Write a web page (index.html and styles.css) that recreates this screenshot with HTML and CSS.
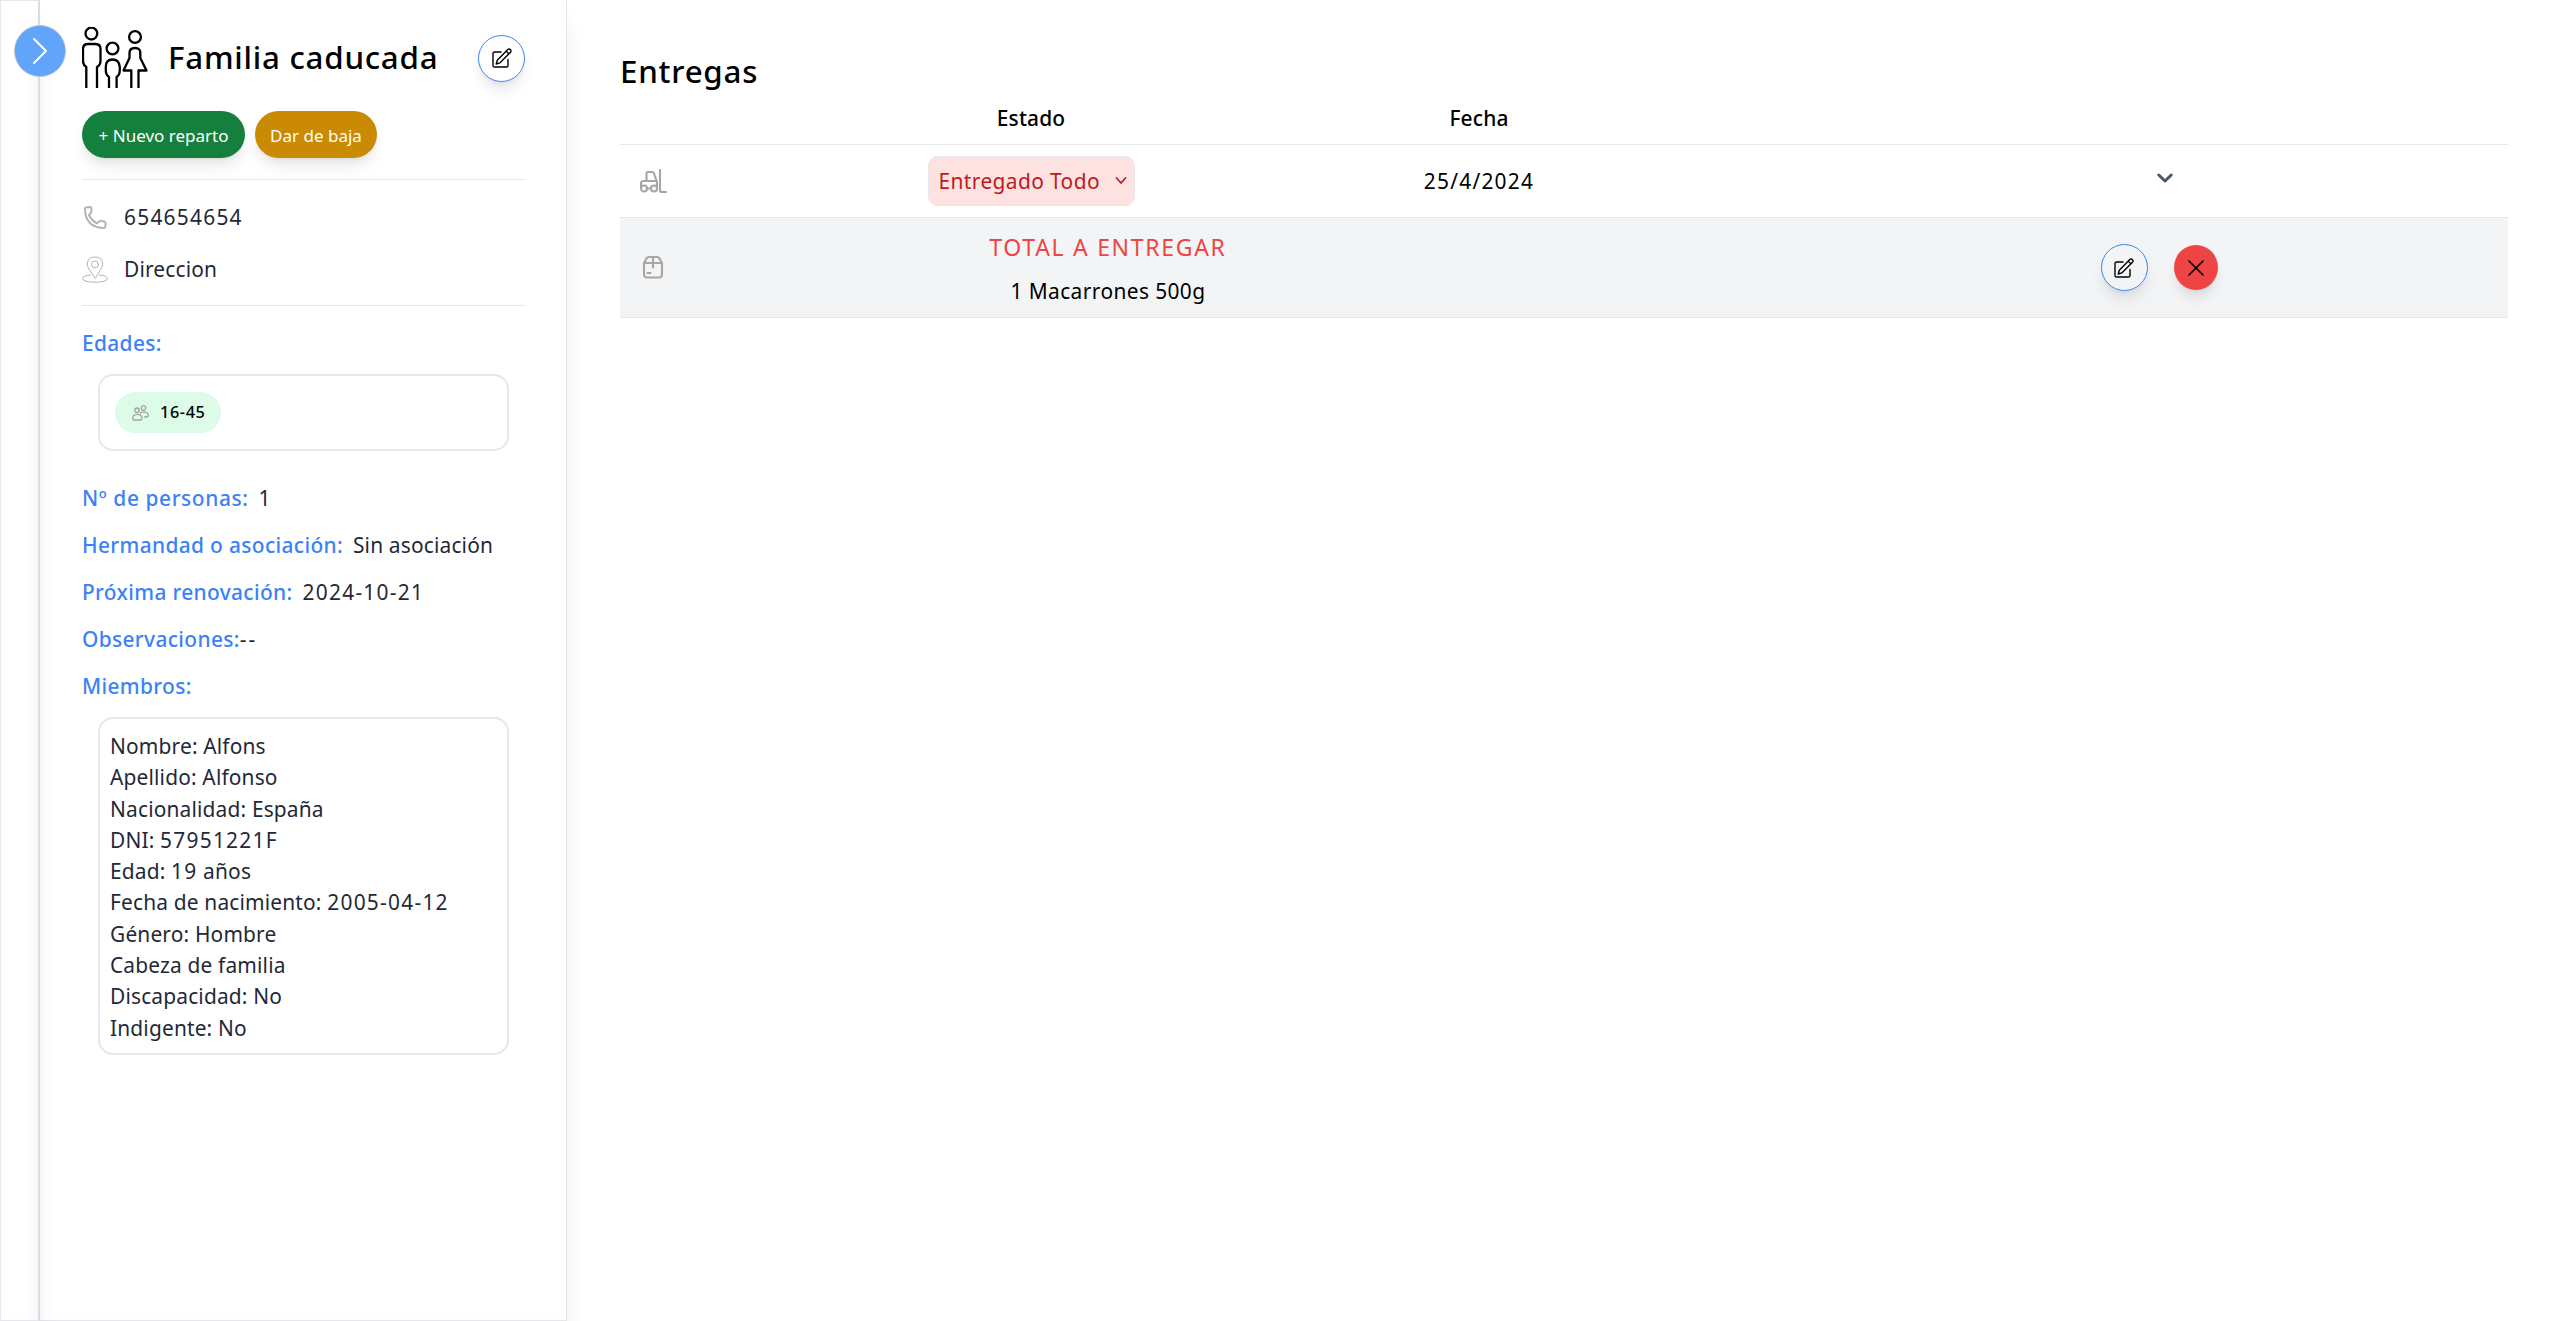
FILE: index.html
```
<!DOCTYPE html>
<html lang="es">
<head>
<meta charset="utf-8">
<title>Familia caducada</title>
<link rel="stylesheet" href="styles.css">
</head>
<body>
<svg class="defs" width="0" height="0">
  <symbol id="edit" viewBox="0 0 20 20">
    <path d="M9 4H2.6Q1 4 1 5.6V17.4Q1 19 2.6 19H14.4Q16 19 16 17.4V11.5"/>
    <path d="M4.2 16 5.3 12.2 15.8 1.6Q17 .5 18.4 1.6 19.6 3 18.5 4.3L8 14.8ZM14.3 3.2 16.9 5.8"/>
  </symbol>
</svg>
<div class="app">
  <div class="rail">
    <button class="toggle" aria-label="Abrir menú">
      <svg width="16" height="28" viewBox="0 0 16 28"><path d="M2 2 14 14 2 26"/></svg>
    </button>
  </div>
  <aside class="panel">
    <header class="family">
      <svg class="people" width="66" height="62" viewBox="0 0 66 62">
        <circle cx="9.4" cy="6.6" r="5.9"/>
        <path d="M4.3 61V40Q1 38 1 34V22Q1 17 6 17H13.500Q18.500 17 18.500 22V34Q18.500 38 15 40V61"/>
        <circle cx="30.500" cy="21.500" r="5.900"/>
        <path d="M27 61V50Q23.800 48 23.800 43V40Q23.800 32.500 30.500 32.500T37.800 40V43Q37.800 48 34.600 50V61"/>
        <circle cx="53" cy="10" r="5.900"/>
        <path d="M49.300 61V43.500H41.500L47.500 31V26Q47.500 21 53 21T58.300 26V31L64.500 43.500H56.500V61"/>
      </svg>
      <h1>Familia caducada</h1>
      <button class="edit" aria-label="Editar"><svg><use href="#edit"/></svg></button>
    </header>
    <div class="actions">
      <button class="pill green">+ Nuevo reparto</button>
      <button class="pill amber">Dar de baja</button>
    </div>
    <section class="contact">
      <div class="line">
        <svg width="26" height="26" viewBox="0 0 26 26" class="phone"><path d="M3 4Q3 2.200 5 2.200L8 2Q9.400 2 9.500 4.500 9.600 6.500 8.700 8.200L7 10Q9.500 15.500 15 18.300L17 16.500Q18.500 15.500 21 16.200 23.700 16.700 23.500 18V21Q23.300 23.200 21 23 12 22.500 7.500 17.500 3 12.500 3 4Z"/></svg>
        <span class="num">654654654</span>
      </div>
      <div class="line">
        <svg width="26" height="27" viewBox="0 0 26 27" class="pin"><path d="M13 22 7.500 14Q5.300 10.500 5.300 8.300 5.500 1 13 1T20.700 8.300Q20.700 10.500 18.500 14Z"/><circle cx="13" cy="8.500" r="3.500"/><path d="M8.500 19Q.700 19.600.700 22.300.700 26.200 13 26.200T25.300 22.300Q25.300 19.600 17.500 19"/></svg>
        <span>Direccion</span>
      </div>
    </section>
    <p class="field"><b>Edades:</b></p>
    <div class="box ages">
      <span class="age">
        <svg width="17" height="16" viewBox="0 0 17 16"><circle cx="5" cy="5.200" r="2.200"/><circle cx="11.500" cy="2.900" r="2.200"/><path d="M.700 13Q1 9.400 5.300 9.400T10 13Q10 15 8.500 15H2.200Q.700 15 .700 13ZM8.500 8Q10 6.800 12 6.900 16.200 7.300 16.300 10.300 16.300 12 14.500 12H12.500"/></svg>
        <span>16-45</span>
      </span>
    </div>
    <p class="field persons"><b>Nº de personas:</b><span class="val">1</span></p>
    <p class="field"><b>Hermandad o asociación:</b><span class="val">Sin asociación</span></p>
    <p class="field renewal"><b>Próxima renovación:</b><span class="val num">2024-10-21</span></p>
    <p class="field"><b>Observaciones:</b><span class="dash">--</span></p>
    <p class="field"><b>Miembros:</b></p>
    <div class="box member">
      <p>Nombre: Alfons</p>
      <p>Apellido: Alfonso</p>
      <p>Nacionalidad: España</p>
      <p>DNI: <span class="num">57951221F</span></p>
      <p>Edad: <span class="num">19</span> años</p>
      <p>Fecha de nacimiento: <span class="num">2005-04-12</span></p>
      <p>Género: Hombre</p>
      <p>Cabeza de familia</p>
      <p>Discapacidad: No</p>
      <p>Indigente: No</p>
    </div>
  </aside>
  <main class="main">
    <h2>Entregas</h2>
    <div class="row head"><span></span><b>Estado</b><b>Fecha</b></div>
    <div class="row delivery">
      <span class="icon"><svg width="28" height="24" viewBox="0 0 28 24"><circle cx="5" cy="19.500" r="3"/><circle cx="15" cy="19.500" r="3"/><path d="M8 19.500H12M2 19V14.500Q2 12 4.500 12H7M7.500 12V5Q7.500 3 9 3H13Q14.500 3 15 4.500L18 13V19M7 12H17.500M21 1V21.500Q21 23 22.500 23H27"/></svg></span>
      <span><button class="state">Entregado Todo<svg width="12" height="8" viewBox="0 0 12 8"><path d="M1.500 1 6 6 10.500 1"/></svg></button></span>
      <span class="num">25/4/2024</span>
      <span></span>
      <span class="chevron"><svg width="16" height="11" viewBox="0 0 16 11"><path d="M1.800 2 8 8 14.200 2"/></svg></span>
    </div>
    <div class="row total">
      <span class="icon"><svg width="28" height="24" viewBox="0 0 28 24"><path d="M5 8 7.500 3.400Q8.300 2 10 2H18Q19.700 2 20.500 3.400L23 8V19.500Q23 22.500 20 22.500H8Q5 22.500 5 19.500ZM5 8H23M14 2V12.500M8.500 18H11.500"/></svg></span>
      <div class="goods"><p class="caps">TOTAL A ENTREGAR</p><p class="item">1 Macarrones 500g</p></div>
      <span></span>
      <span class="tools">
        <button class="edit" aria-label="Editar"><svg><use href="#edit"/></svg></button>
        <button class="remove" aria-label="Eliminar"><svg width="16" height="16" viewBox="0 0 16 16"><path d="M1 1 15 15M15 1 1 15"/></svg></button>
      </span>
    </div>
  </main>
</div>
</body>
</html>
```
FILE: styles.css
```
* { box-sizing: border-box; margin: 0; padding: 0; }
body { background: #fff; font: 20.9px/31.3px "Noto Sans", sans-serif; color: #000; letter-spacing: .17px; }
button { font: inherit; letter-spacing: inherit; border: 0; background: none; }
svg { display: block; fill: none; stroke: currentColor; stroke-linecap: round; stroke-linejoin: round; flex: none; }
.defs { position: absolute; }
b, h1, h2 { font-weight: 500; }
.num { letter-spacing: 1.25px; }

.app { display: flex; height: 1321px; }
.rail { position: relative; width: 40px; border: 1px solid #e5e7eb; border-right: 2px solid #dcdce0; box-shadow: 0 20px 25px -5px rgba(0,0,0,.1), 0 8px 10px -6px rgba(0,0,0,.1); }
.toggle { position: absolute; left: 13px; top: 24px; width: 52px; height: 52px; border-radius: 50%; border: 1px solid #b9c4d4; background: #60a5fa; color: #fff; display: grid; place-items: center; }
.toggle svg { stroke-width: 2; }
.panel { width: 527px; padding: 27px 41px 0 42px; border-right: 1px solid #e5e7eb; border-bottom: 1px solid #e5e7eb; color: #1f2937; box-shadow: 0 20px 25px -5px rgba(0,0,0,.1), 0 8px 10px -6px rgba(0,0,0,.1); }

.family { display: flex; align-items: center; height: 62px; color: #000; }
.people { stroke-width: 2.3; stroke-linecap: butt; }
h1 { margin-left: 20px; font-size: 31.3px; letter-spacing: .75px; white-space: nowrap; }
.edit { width: 47px; height: 47px; border: 1px solid #3b82f6; border-radius: 50%; display: grid; place-items: center; box-shadow: 0 10px 15px -3px rgba(0,0,0,.1), 0 4px 6px -4px rgba(0,0,0,.1); }
.edit svg { width: 20px; height: 20px; stroke-width: 1.4; }
.family .edit { margin-left: auto; }

.actions { display: flex; gap: 10px; margin-top: 22px; height: 69px; border-bottom: 1px solid #e5e7eb; }
.pill { height: 47px; border-radius: 24px; color: #fff; font-size: 17px; letter-spacing: 0; padding-top: 3px; box-shadow: 0 10px 15px -3px rgba(0,0,0,.1), 0 4px 6px -4px rgba(0,0,0,.1); }
.green { width: 163px; background: #15803d; }
.amber { width: 122px; background: #ca8a04; }

.contact { height: 126px; padding-top: 22px; border-bottom: 1px solid #e5e7eb; }
.line { display: flex; align-items: center; gap: 16px; height: 31px; margin-bottom: 21px; }
.line svg { color: #b3b3b3; }
.phone { stroke-width: 2; }
.pin { stroke-width: 1; }

.field { display: flex; height: 47px; align-items: center; }
.field b { color: #3b82f6; letter-spacing: .35px; }
.persons b { letter-spacing: .6px; }
.contact + .field { margin-top: 14px; }
.val { margin-left: 10px; }
.dash { letter-spacing: 2px; }
.box { margin: 0 16px; border: 2px solid #e5e7eb; border-radius: 15px; }
.ages { height: 77px; margin-top: 7px; margin-bottom: 24px; padding: 16px 15px; }
.age { display: flex; align-items: center; gap: 11px; width: 106px; height: 41px; padding-left: 17px; border-radius: 21px; background: #dcfce7; color: #000; font-size: 16.300px; font-weight: 500; letter-spacing: .6px; }
.age svg { color: #a3a3a3; stroke-width: 1.3; }
.member { height: 338px; margin-top: 7px; padding: 12px 10px; }

.main { flex: 1; padding: 56px 52px 0 53px; }
h2 { font-size: 31.3px; letter-spacing: .75px; }
.row { display: grid; grid-template-columns: 186px 450px 446px 121px 684px; align-items: center; text-align: center; border-bottom: 1px solid #e5e7eb; }
.head { height: 58px; padding-top: 6px; }
.delivery { height: 73px; }
.icon { padding-left: 19px; color: #a8a5a5; }
.icon svg { stroke-width: 2.1; }
.total .icon { padding-bottom: 2px; }
.state { display: inline-flex; align-items: center; gap: 15px; width: 207px; height: 50px; padding-left: 10px; border: 1px solid #e5e7eb; border-radius: 10px; background: #fee2e2; color: #b91c1c; letter-spacing: .4px; vertical-align: middle; }
.state svg { stroke-width: 1.7; }
.chevron { display: grid; place-items: center; padding-bottom: 5px; color: #4b5563; }
.chevron svg { stroke-width: 3; }
.total { grid-template-columns: 186px 604px 413px 684px; height: 100px; background: #f3f4f6; }
.caps { font-size: 23px; letter-spacing: 1.7px; color: #ef4444; margin-bottom: 13px; }
.goods { padding-top: 3px; }
.item { letter-spacing: .4px; }
.tools { display: flex; align-items: center; justify-content: center; gap: 26px; padding-right: 12px; }
.remove { width: 44px; height: 45px; border-radius: 50%; background: #ef4444; display: grid; place-items: center; box-shadow: 0 10px 15px -3px rgba(0,0,0,.1), 0 4px 6px -4px rgba(0,0,0,.1); }
.remove svg { stroke-width: 1.7; }
```
